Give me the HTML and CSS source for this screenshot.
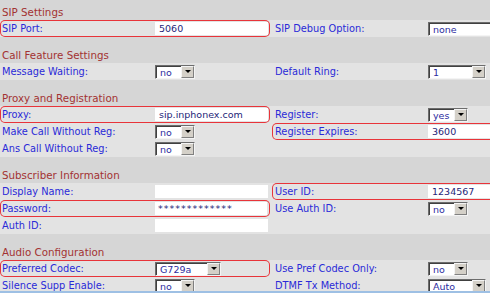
FILE: index.html
```html
<!DOCTYPE html>
<html lang="en">
<head>
    <meta charset="UTF-8">
    <title>Line Settings</title>
    <link rel="stylesheet" href="styles.css">
</head>
<body>
    <div class="page">
        <div class="head first">SIP Settings</div>
        <div class="row">
            <div class="half left mark"><span class="label">SIP Port:</span><span class="field">5060</span></div>
            <div class="half right"><span class="label">SIP Debug Option:</span><span class="select wide"><span class="val">none</span></span></div>
        </div>

        <div class="head">Call Feature Settings</div>
        <div class="row">
            <div class="half left"><span class="label">Message Waiting:</span><span class="select"><span class="val">no</span><i class="btn"></i></span></div>
            <div class="half right"><span class="label">Default Ring:</span><span class="select ring"><span class="val">1</span><i class="btn"></i></span></div>
        </div>

        <div class="head">Proxy and Registration</div>
        <div class="row">
            <div class="half left mark"><span class="label">Proxy:</span><span class="field">sip.inphonex.com</span></div>
            <div class="half right"><span class="label">Register:</span><span class="select"><span class="val">yes</span><i class="btn"></i></span></div>
        </div>
        <div class="row">
            <div class="half left"><span class="label">Make Call Without Reg:</span><span class="select"><span class="val">no</span><i class="btn"></i></span></div>
            <div class="half right mark"><span class="label">Register Expires:</span><span class="field">3600</span></div>
        </div>
        <div class="row">
            <div class="half left"><span class="label">Ans Call Without Reg:</span><span class="select"><span class="val">no</span><i class="btn"></i></span></div>
            <div class="half right"></div>
        </div>

        <div class="head">Subscriber Information</div>
        <div class="row">
            <div class="half left"><span class="label">Display Name:</span><span class="field"></span></div>
            <div class="half right mark"><span class="label">User ID:</span><span class="field">1234567</span></div>
        </div>
        <div class="row">
            <div class="half left mark"><span class="label">Password:</span><span class="field pw">*************</span></div>
            <div class="half right"><span class="label">Use Auth ID:</span><span class="select"><span class="val">no</span><i class="btn"></i></span></div>
        </div>
        <div class="row">
            <div class="half left"><span class="label">Auth ID:</span><span class="field"></span></div>
            <div class="half right"></div>
        </div>

        <div class="head">Audio Configuration</div>
        <div class="row">
            <div class="half left mark"><span class="label">Preferred Codec:</span><span class="select codec"><span class="val">G729a</span><i class="btn"></i></span></div>
            <div class="half right"><span class="label">Use Pref Codec Only:</span><span class="select"><span class="val">no</span><i class="btn"></i></span></div>
        </div>
        <div class="row">
            <div class="half left"><span class="label">Silence Supp Enable:</span><span class="select"><span class="val">no</span><i class="btn"></i></span></div>
            <div class="half right"><span class="label">DTMF Tx Method:</span><span class="select ring"><span class="val">Auto</span><i class="btn"></i></span></div>
        </div>
    </div>
</body>
</html>
```

FILE: styles.css
```css
body {
    margin: 0;
    width: 490px;
    height: 293px;
    overflow: hidden;
    background-color: #d6d6d6;
    font-family: 'DejaVu Sans', Verdana, sans-serif;
    font-size: 9.8px;
}
.page {
    border-bottom: 2px solid #9ec0e4;
    height: 291px;
    overflow: hidden;
}
.head {
    height: 16px;
    line-height: 17px;
    margin-top: 10px;
    padding-left: 2px;
    font-size: 10.3px;
    color: #a33232;
}
.head.first { margin-top: 4px; }
.row {
    display: flex;
    gap: 2px;
    height: 17px;
    background-color: #e3e3e3;
}
.half {
    display: flex;
    align-items: center;
    flex-shrink: 0;
    border-radius: 5px;
}
.left { width: 270px; }
.right { width: 240px; }
.mark { box-shadow: inset 0 0 0 1px #e8343a; }
.label {
    color: #2a2ad8;
    flex-shrink: 0;
    white-space: nowrap;
}
.left .label { width: 153px; padding-left: 2px; }
.right .label { width: 153px; padding-left: 3px; }
.field {
    display: block;
    height: 13px;
    line-height: 13px;
    padding-left: 4px;
    font-size: 9.5px;
    background-color: #fff;
    color: #1e1e78;
}
.field.pw {
    padding-left: 3px;
    letter-spacing: 1px;
}
.left .field { width: 109px; }
.right .field { width: 120px; }
.select {
    display: flex;
    width: 40px;
    height: 14px;
    box-sizing: border-box;
    border: 1px solid;
    border-color: #6c6c6c #f4f4f4 #f4f4f4 #6c6c6c;
    background-color: #fff;
    font-size: 9.5px;
}
.select.codec { width: 66px; }
.select.ring { width: 58px; }
.select.wide { width: 80px; }
.val {
    flex: 1;
    line-height: 12px;
    padding-left: 3px;
    color: #2c2ca0;
    border-left: 1px solid #404040;
    border-top: 1px solid #404040;
}
.btn {
    width: 13px;
    background-color: #d4d0c8;
    border: 1px solid;
    border-color: #f4f4f4 #808080 #808080 #f4f4f4;
    box-sizing: border-box;
    display: flex;
    align-items: center;
    justify-content: center;
}
.btn::after {
    content: "";
    border-left: 3px solid transparent;
    border-right: 3px solid transparent;
    border-top: 3px solid #000;
}
```
